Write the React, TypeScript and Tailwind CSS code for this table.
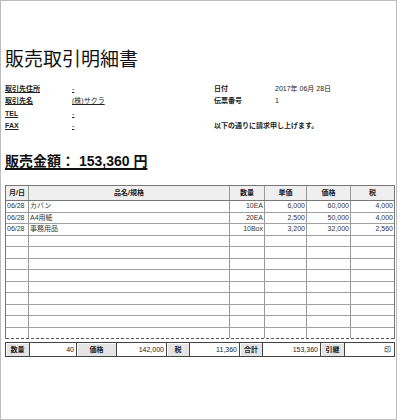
import React from "react";

const rows: string[][] = [
  ["06/28", "カバン", "10EA", "6,000", "60,000", "4,000"],
  ["06/28", "A4用紙", "20EA", "2,500", "50,000", "4,000"],
  ["06/28", "事務用品", "10Box", "3,200", "32,000", "2,560"],
];

const cols = "grid grid-cols-[23px_201px_35px_42px_44px_43px]";

export default function App() {
  const data: string[][] = [...rows];
  while (data.length < 12) data.push(["", "", "", "", "", ""]);
  return (
    <div className="w-[397px] h-[420px] border border-[#bdbdbd] bg-white font-['Liberation_Sans','Noto_Sans_CJK_JP',sans-serif] text-[#222] overflow-hidden">
      <div className="pl-[4px] pt-[45px] text-[19px] leading-[24px] text-[#111] font-['Noto_Sans_CJK_JP',sans-serif]">
        販売取引明細書
      </div>

      <div className="mt-[13px] pl-[4px] grid grid-cols-[67px_142px_61px_1fr] auto-rows-[12.3px] text-[7px] leading-[12.3px]">
        <div className="font-bold underline">取引先住所</div>
        <div className="underline">-</div>
        <div className="font-bold">日付</div>
        <div>2017年 06月 28日</div>

        <div className="font-bold underline">取引先名</div>
        <div><span className="underline">(株)サクラ</span></div>
        <div className="font-bold">伝票番号</div>
        <div>1</div>

        <div className="font-bold underline">TEL</div>
        <div className="underline">-</div>
        <div></div>
        <div></div>

        <div className="font-bold underline">FAX</div>
        <div className="underline">-</div>
        <div className="col-span-2 font-bold">以下の通りに請求申し上げます。</div>
      </div>

      <div className="mt-[20px] pl-[4px] text-[14px] leading-[18px] font-bold text-[#111]">
        <span className="underline decoration-2 underline-offset-[2px]">販売金額： 153,360 円</span>
      </div>

      <div className="mt-[15px] ml-[4px] w-[390px] border-x border-t border-[#777] text-[7px]">
        <div className={`${cols} h-[15px] bg-[#efefef] border-b border-[#777] font-bold leading-[14px]`}>
          <div className="text-center border-r border-[#999]">月/日</div>
          <div className="text-center border-r border-[#999]">品名/規格</div>
          <div className="text-center border-r border-[#999]">数量</div>
          <div className="text-center border-r border-[#999]">単価</div>
          <div className="text-center border-r border-[#999]">価格</div>
          <div className="text-center">税</div>
        </div>
        {data.map((r, i) => (
          <div
            key={i}
            className={`${cols} h-[11.5px] leading-[10.5px] text-[#333] ${
              i === data.length - 1 ? "border-b border-dashed border-[#555]" : "border-b border-[#a0a0a0]"
            }`}
          >
            <div className="pl-[1px] border-r border-[#999]">{r[0]}</div>
            <div className="pl-[1px] border-r border-[#999]">{r[1]}</div>
            <div className="text-right pr-[1px] border-r border-[#999]">{r[2]}</div>
            <div className="text-right pr-[1px] border-r border-[#999]">{r[3]}</div>
            <div className="text-right pr-[1px] border-r border-[#999]">{r[4]}</div>
            <div className="text-right pr-[1px]">{r[5]}</div>
          </div>
        ))}
      </div>

      <div className="mt-[3px] ml-[4px] w-[390px] grid grid-cols-[24px_47px_40px_50px_23px_50px_23px_58px_24px_49px] h-[15px] border border-[#444] text-[7px] leading-[13px]">
        <div className="bg-[#e4e4e4] font-bold text-center border-r border-[#444] shadow-[inset_1px_1px_0_#fff]">数量</div>
        <div className="text-right pr-[2px] border-r border-[#444]">40</div>
        <div className="bg-[#e4e4e4] font-bold text-center border-r border-[#444] shadow-[inset_1px_1px_0_#fff]">価格</div>
        <div className="text-right pr-[2px] border-r border-[#444]">142,000</div>
        <div className="bg-[#e4e4e4] font-bold text-center border-r border-[#444] shadow-[inset_1px_1px_0_#fff]">税</div>
        <div className="text-right pr-[2px] border-r border-[#444]">11,360</div>
        <div className="bg-[#e4e4e4] font-bold text-center border-r border-[#444] shadow-[inset_1px_1px_0_#fff]">合計</div>
        <div className="text-right pr-[2px] border-r border-[#444]">153,360</div>
        <div className="bg-[#e4e4e4] font-bold text-center border-r border-[#444] shadow-[inset_1px_1px_0_#fff]">引継</div>
        <div className="text-right pr-[3px]">印</div>
      </div>
    </div>
  );
}
